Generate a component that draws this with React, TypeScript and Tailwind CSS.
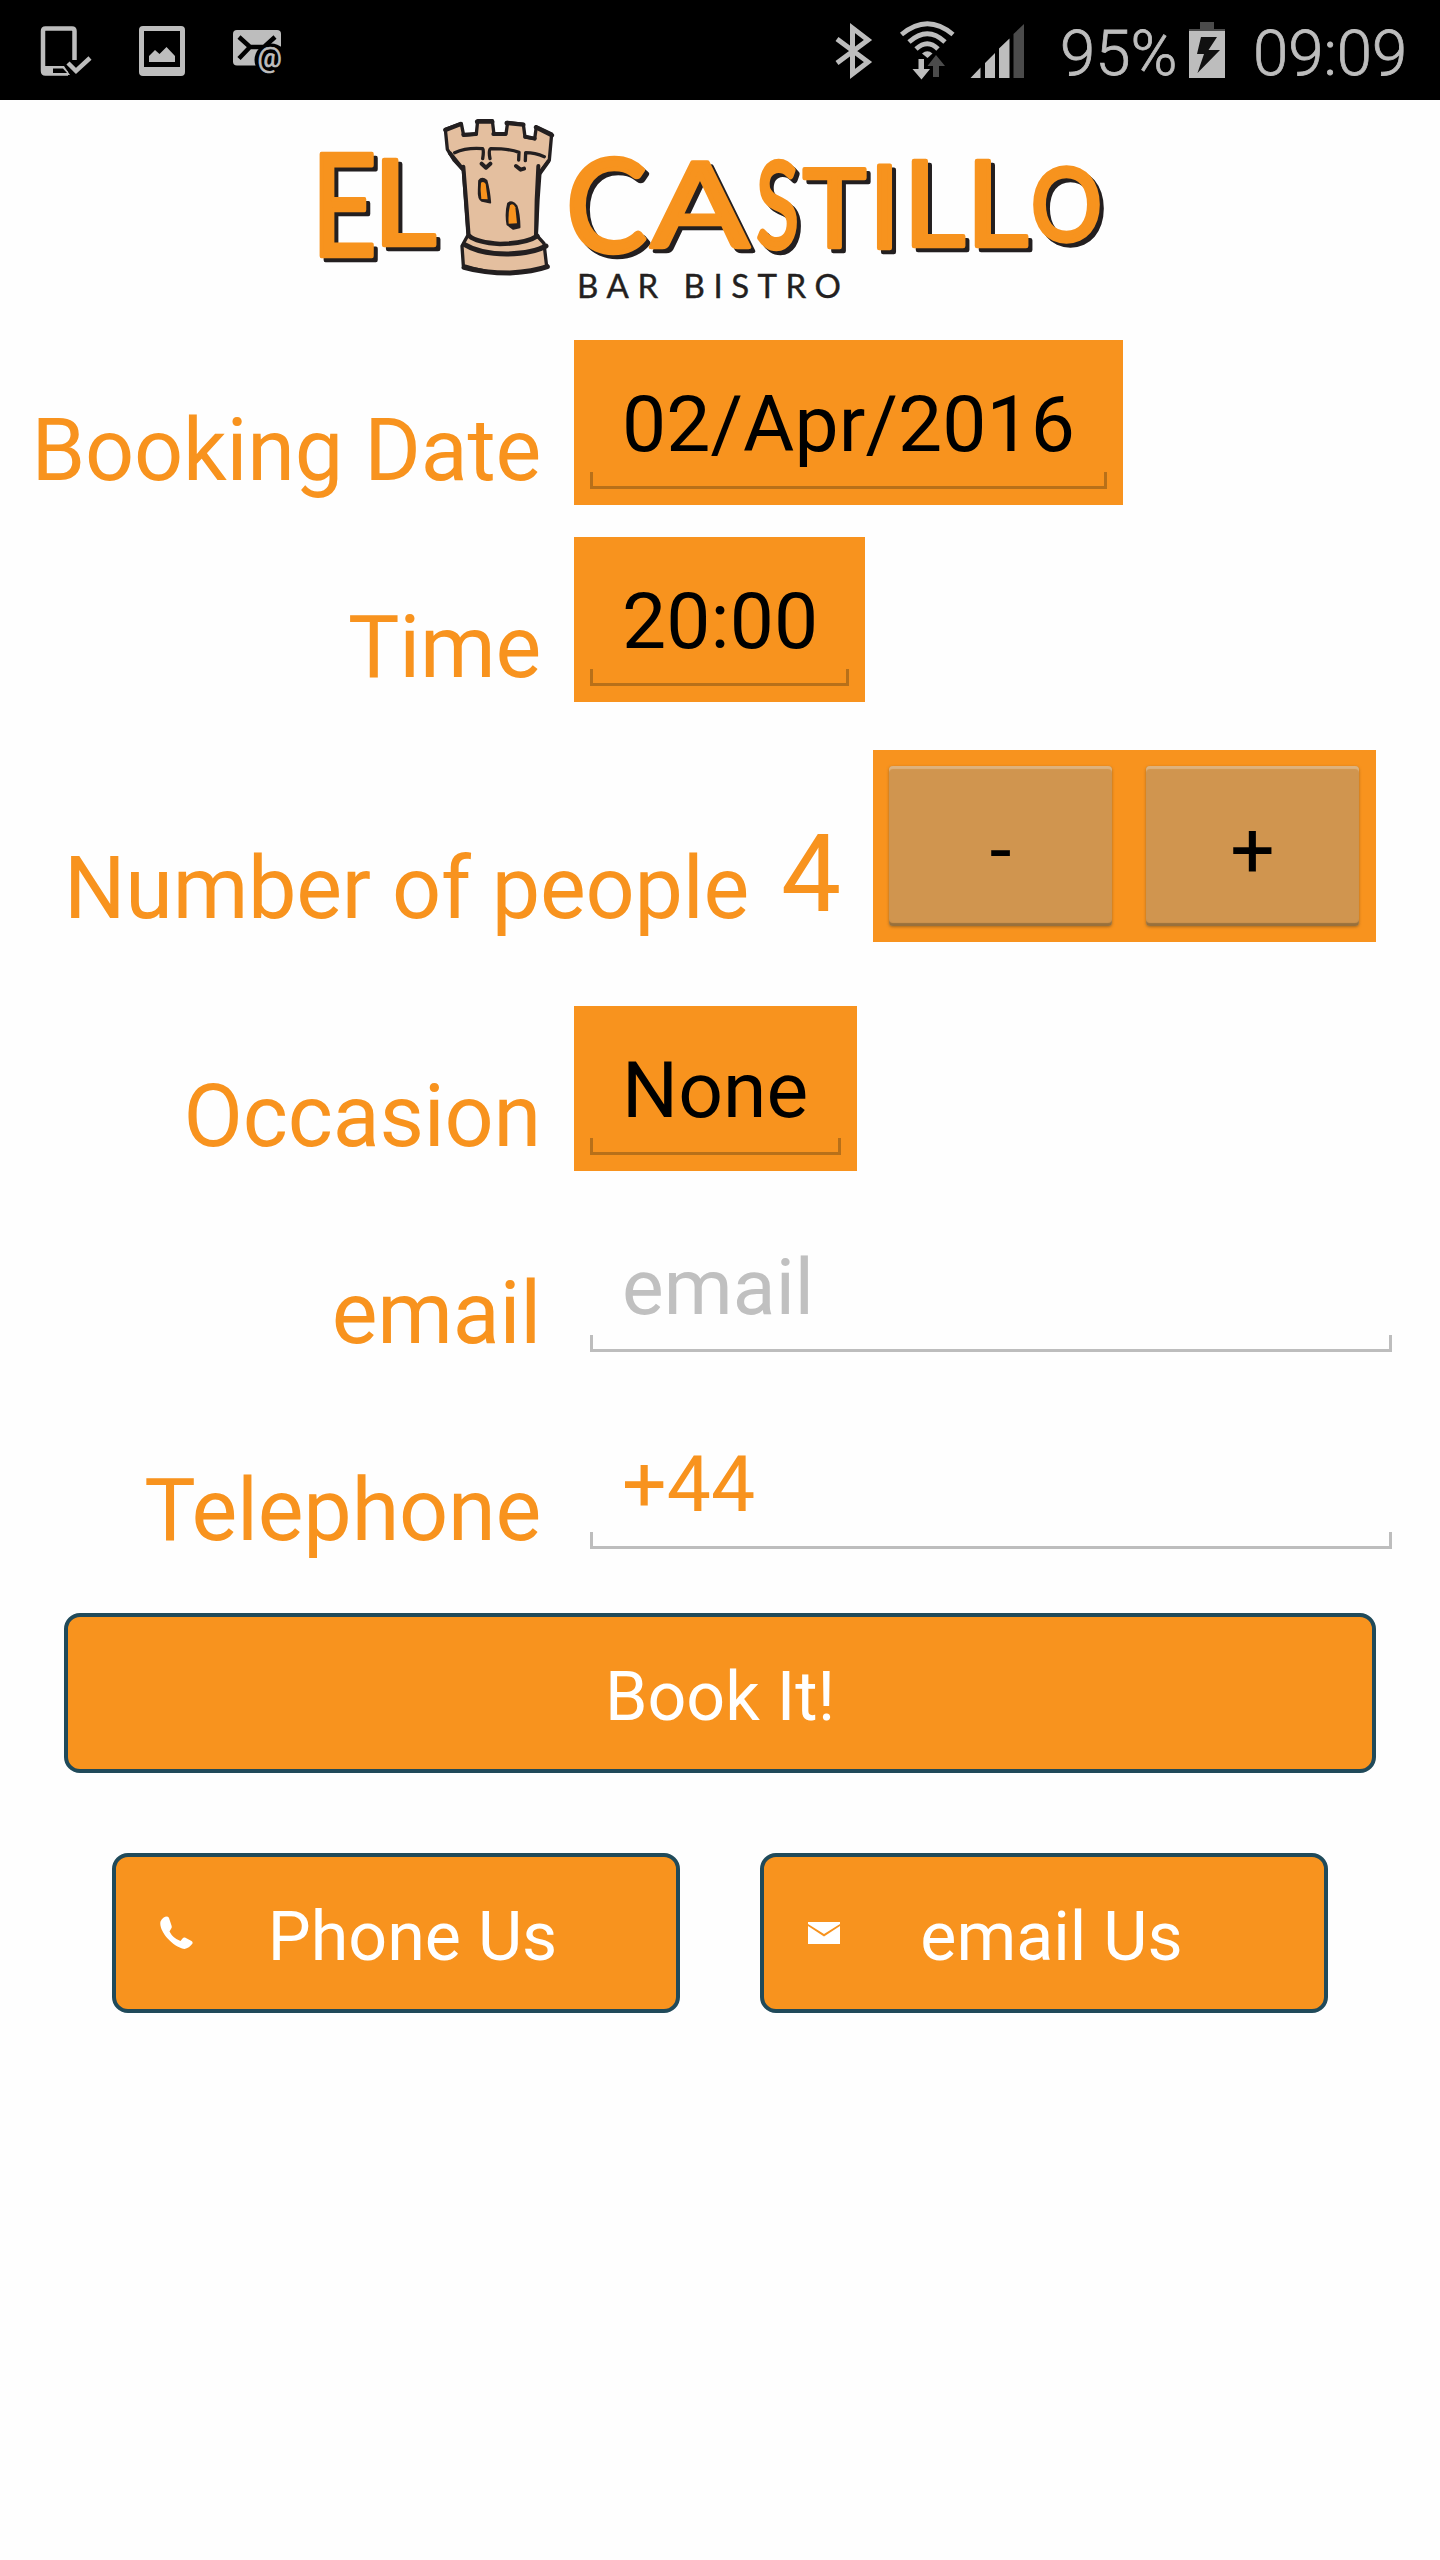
import type { ReactNode } from "react";

type LogoLetter = { char: string; x: number; base: number; size: number; width: number };

const LETTERS: LogoLetter[] = [
  { char: "E", x: 311, base: 256, size: 141, width: 66 },
  { char: "L", x: 373, base: 245, size: 119, width: 63 },
  { char: "C", x: 566, base: 252, size: 130, width: 81 },
  { char: "A", x: 651, base: 247, size: 119, width: 98 },
  { char: "S", x: 756, base: 248, size: 120, width: 43 },
  { char: "T", x: 803, base: 247, size: 109, width: 63 },
  { char: "I", x: 869, base: 248, size: 115, width: 31 },
  { char: "L", x: 903, base: 246, size: 119, width: 62 },
  { char: "L", x: 966, base: 246, size: 119, width: 62 },
  { char: "O", x: 1031, base: 241, size: 100, width: 71 },
];

function Lettering() {
  return (
    <g fill="#f7931e" stroke="#f7931e" strokeWidth={4.5} strokeLinejoin="round" className="drop-shadow-[4px_4px_0_#231f20]">
      {LETTERS.map((l, i) => (
        <text
          key={i}
          x={l.x}
          y={l.base}
          fontSize={l.size}
          textLength={l.width}
          lengthAdjust="spacingAndGlyphs"
          fontFamily="Lato, sans-serif"
        >
          {l.char}
        </text>
      ))}
    </g>
  );
}

function Castle() {
  return (
    <g transform="translate(300 100) scale(0.33333)" stroke="#231f20" strokeLinejoin="round" strokeLinecap="round">
      <path
        d="M436 88L484 71L491 106L529 102L533 62L577 62L582 103L618 102L623 67L670 73L675 111L704 116L709 80L755 102L748 180L720 216L714 300L709 405L732 430L740 500Q620 540 490 497L486 438L504 405L490 210L462 180L442 148Z"
        fill="#e4bf9f"
        strokeWidth={10}
      />
      <g fill="none">
        <path d="M436 90L482 72M531 65H577M620 69L670 74M708 82L756 106" strokeWidth={13} />
        <path d="M490 104L528 102M580 102H616M676 110L704 116" strokeWidth={12} />
        <path d="M464 158Q500 142 548 146Q552 152 548 176M570 176Q565 150 572 146Q630 146 657 157L656 180M676 182L677 158Q705 158 733 170" strokeWidth={10} />
        <path d="M545 191L558 203L571 191M648 198L662 209L672 206" strokeWidth={12} />
        <path d="M745 184L721 218M450 160L486 205" strokeWidth={12} />
        <path d="M490 200L498 300L506 408M715 198L710 300L708 405" strokeWidth={12} />
        <path d="M508 408Q530 427 600 432Q680 430 712 408" strokeWidth={14} />
        <path d="M494 434Q540 462 620 462Q700 460 738 438" strokeWidth={15} />
        <path d="M492 502Q550 519 630 519Q700 515 742 500" strokeWidth={15} />
      </g>
      <path d="M537 242Q546 230 560 242Q568 270 571 308L546 303Q534 296 536 270Z" fill="#231f20" strokeWidth={5} />
      <path d="M543 248Q551 242 557 252L563 298L544 297Q540 270 543 248Z" fill="#f7931e" stroke="none" />
      <path d="M624 310Q636 300 650 318Q658 340 659 382L640 387L622 374Q616 340 624 310Z" fill="#231f20" strokeWidth={5} />
      <path d="M630 316Q640 308 646 322L651 370L626 371Q624 340 630 316Z" fill="#f7931e" stroke="none" />
    </g>
  );
}

function Logo() {
  return (
    <svg className="block h-[200px] w-[800px]" viewBox="310 110 800 200" role="img" aria-label="El Castillo Bar Bistro">
      <Lettering />
      <Castle />
      <text x={577} y={298} fontSize={33} textLength={264} fontFamily="Lato, sans-serif" fill="#231f20" stroke="#231f20" strokeWidth={0.4}>
        BAR BISTRO
      </text>
    </svg>
  );
}

function StatusBar() {
  return (
    <header className="flex h-[100px] items-center bg-black text-[#bdbdbd]">
      <svg className="ml-[40px] h-[100px] w-[52px]" viewBox="40 0 52 100" fill="none">
        <path d="M74.500 60V31q0-2.500-2.500-2.500H45.500q-2.500 0-2.500 2.500V71q0 2.500 2.500 2.500H68" stroke="#bdbdbd" strokeWidth="4.500" />
        <path d="M42 66H64L70 75H44Z" fill="#bdbdbd" />
        <path d="M53 68.500H63L67 73H53Z" fill="#000" />
        <path d="M68 63L76 71L90 58" stroke="#bdbdbd" strokeWidth="4.500" />
      </svg>
      <svg className="ml-[46px] h-[100px] w-[48px]" viewBox="138 0 48 100">
        <path fillRule="evenodd" d="M143 26H181Q185 26 185 30V72Q185 76 181 76H143Q139 76 139 72V30Q139 26 143 26ZM144 31V67H180V31Z" fill="#bdbdbd" />
        <path d="M149 62V56L155 50L159.500 54L166.500 47L175 56V62Z" fill="#bdbdbd" />
      </svg>
      <svg className="ml-[46px] h-[100px] w-[52px]" viewBox="232 0 52 100">
        <rect x="233" y="30" width="48" height="35.500" rx="4" fill="#bdbdbd" />
        <path d="M239 37L250 47H264L275 37M250 47L239 58.500" fill="none" stroke="#000" strokeWidth="4.500" />
        <circle cx="271" cy="60" r="16.500" fill="#000" />
        <text x="257.500" y="67" fontSize="27" fontFamily="Roboto, sans-serif" fill="#bdbdbd" stroke="#bdbdbd" strokeWidth="0.700">@</text>
      </svg>
      <svg className="ml-[551px] h-[100px] w-[40px]" viewBox="835 0 40 100" fill="none">
        <path d="M837 39L868 62L852.500 74V28L868 40L837 63" stroke="#bdbdbd" strokeWidth="5" />
      </svg>
      <svg className="ml-[24px] h-[100px] w-[58px]" viewBox="899 0 58 100" fill="none">
        <g stroke="#bdbdbd" strokeWidth="4.800">
          <path d="M901.500 34.500Q927.500 13 953 34.500" />
          <path d="M909 42Q927.500 25.500 945 42" />
          <path d="M916 49Q927.500 38.500 938 49" />
        </g>
        <path d="M922 53.500Q927.500 49 932.500 53.500L927.500 58Z" fill="#bdbdbd" />
        <path d="M918.500 59H924V69H930L921.500 79.500L912.500 69H918.500Z" fill="#bdbdbd" />
        <path d="M936 55L945 66H939V77H933V66H927.500Z" fill="#4b4b4b" />
      </svg>
      <svg className="ml-[13px] h-[100px] w-[55px]" viewBox="970 0 55 100">
        <path d="M970.500 78L980.500 67.500V78ZM985 78V63L995 53V78ZM999 78V48.500L1009.500 38.500V78Z" fill="#bdbdbd" />
        <path d="M1013.500 78V34L1024 24V78Z" fill="#4b4b4b" />
      </svg>
      <span className="mt-[7px] ml-[35px] w-[126px] text-[63.5px] leading-[75px] font-light whitespace-nowrap [-webkit-text-stroke:0.8px_#bdbdbd]">95%</span>
      <svg className="ml-[2px] h-[100px] w-[38px]" viewBox="1188 0 38 100">
        <path d="M1200 22H1214V29H1225V31H1189V29H1200Z" fill="#4b4b4b" />
        <rect x="1189" y="31" width="36" height="47" fill="#bdbdbd" />
        <path d="M1201 37H1217L1208.500 50H1220L1197.500 73L1204 54H1197Z" fill="#111" />
      </svg>
      <span className="mt-[7px] ml-[27px] text-[63.5px] leading-[75px] font-light whitespace-nowrap [-webkit-text-stroke:0.8px_#bdbdbd]">09:09</span>
    </header>
  );
}

function Label({ children }: { children: ReactNode }) {
  return (
    <span className="w-[542px] shrink-0 pr-px pb-[3px] text-right text-[86.3px] leading-[103px] tracking-[-0.2px] whitespace-nowrap text-[#f8931e]">
      {children}
    </span>
  );
}

function Picker({ value, width }: { value: string; width: string }) {
  return (
    <div className={`${width} h-[165px] bg-[#f8931e] px-4 pt-[37px]`}>
      <div className="px-8 text-[78.6px] leading-[95px] tracking-[0.1px] whitespace-nowrap text-black">{value}</div>
      <div className="h-[17px] border-x-[3px] border-b-[3px] border-[#b87019]" />
    </div>
  );
}

function Field({ value, color }: { value: string; color: string }) {
  return (
    <div className="h-[165px] w-[834px] px-4 pt-[37px]">
      <div className={`px-8 text-[78.6px] leading-[95px] tracking-[0.1px] whitespace-nowrap ${color}`}>{value}</div>
      <div className="h-[17px] border-x-[3px] border-b-[3px] border-[#bdbdbd]" />
    </div>
  );
}

function Row({ label, children }: { label: string; children: ReactNode }) {
  return (
    <div className="flex h-[165px] items-end gap-8">
      <Label>{label}</Label>
      {children}
    </div>
  );
}

function StepButton({ sign, width }: { sign: string; width: string }) {
  return (
    <button
      className={`${width} h-[160px] rounded-[4px] bg-[#d0954f] pt-[7px] text-[78.4px] leading-[94px] text-black shadow-[inset_0_3px_1px_#ddb27e,inset_0_-3px_1px_#98703c,0_1px_3px_#a86a20]`}
    >
      {sign}
    </button>
  );
}

function ContactButton({ label, textWidth, children }: { label: string; textWidth: string; children: ReactNode }) {
  return (
    <button className="flex h-[160px] w-[568px] items-center rounded-2xl border-4 border-[#204a5a] bg-[#f8931e] text-white">
      <svg className="ml-[43px] size-[34px] shrink-0" viewBox="0 0 34 34" fill="#fff">
        {children}
      </svg>
      <span className={`${textWidth} pt-[8px] text-center text-[68.2px] leading-[82px] whitespace-nowrap`}>{label}</span>
    </button>
  );
}

export default function App() {
  return (
    <div className="h-[2560px] w-[1440px] overflow-hidden bg-[#fefefe] font-[Roboto,sans-serif]">
      <StatusBar />
      <div className="flex h-[240px] pt-[10px] pl-[310px]">
        <Logo />
      </div>
      <main>
        <div className="flex flex-col gap-8">
          <Row label="Booking Date"><Picker value="02/Apr/2016" width="w-[549px]" /></Row>
          <Row label="Time"><Picker value="20:00" width="w-[291px]" /></Row>
        </div>
        <div className="mt-12 flex h-[192px] items-end text-[#f8931e]">
          <span className="w-[749px] pb-[2px] text-right text-[86.3px] leading-[103px] tracking-[-0.25px] whitespace-nowrap">Number of people</span>
          <span className="ml-[32px] w-[60px] pb-[4px] text-[107px] leading-[126px]">4</span>
          <div className="ml-[32px] flex h-[192px] w-[503px] items-center justify-between bg-[#f8931e] pr-[17px] pl-[16px]">
            <StepButton sign="-" width="w-[223px]" />
            <StepButton sign="+" width="w-[213px]" />
          </div>
        </div>
        <div className="mt-16 flex flex-col gap-8">
          <Row label="Occasion"><Picker value="None" width="w-[283px]" /></Row>
          <Row label="email"><Field value="email" color="text-[#c0c0c0]" /></Row>
          <Row label="Telephone"><Field value="+44" color="text-[#f8931e]" /></Row>
        </div>
        <div className="mt-12 px-16">
          <button className="block h-[160px] w-full rounded-2xl border-4 border-[#204a5a] bg-[#f8931e] pt-[8px] text-[68.2px] leading-[82px] text-white">
            Book It!
          </button>
        </div>
        <div className="mt-20 flex gap-20 px-28">
          <ContactButton label="Phone Us" textWidth="w-[439px]">
            <path d="M8 0.500Q4 0.500 1.500 5.500C-0.500 14 12 30 25.500 33Q30 32 33.500 27.500Q34 26 32.500 25L26 21.500Q24.500 21 23.500 22.500L21.500 25Q14 22.500 10.500 15.500L12.500 12Q13 11 12.500 9.500L10 2Q9.500 0.500 8 0.500Z" />
          </ContactButton>
          <ContactButton label="email Us" textWidth="w-[421px]">
            <path d="M1 6H33V8L17 18L1 8ZM1 10L17 20.500L33 10V28H1Z" />
          </ContactButton>
        </div>
      </main>
    </div>
  );
}
